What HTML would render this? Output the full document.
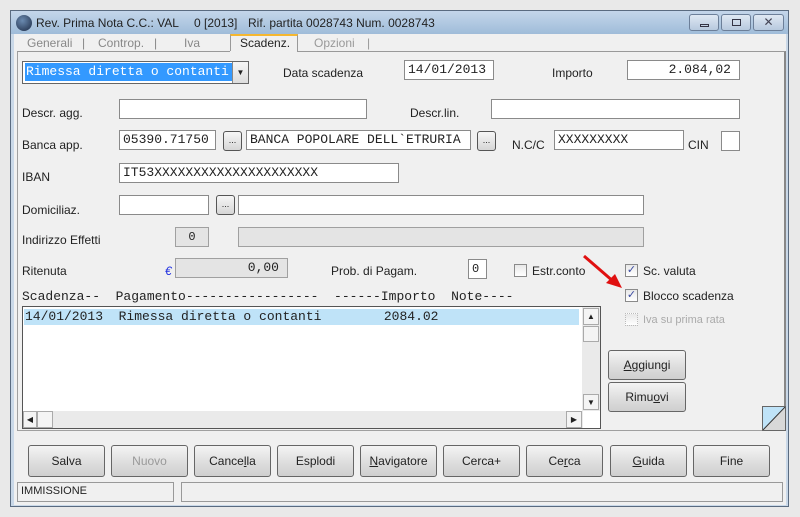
<!DOCTYPE html>
<html><head><meta charset="utf-8"><style>
*{box-sizing:border-box;margin:0;padding:0}
body{width:800px;height:517px;background:#e9e9e9;position:relative;overflow:hidden;font-family:"Liberation Sans",sans-serif;font-size:12px;color:#222}
.a{position:absolute}
.lbl{position:absolute;font-size:12px;color:#222}
.inp{position:absolute;background:#fff;border:1px solid #8a8a8a;height:20px;font-family:"Liberation Mono",monospace;font-size:13px;padding:1px 3px;line-height:16px;white-space:nowrap;overflow:hidden}
.dis{background:#e4e4e4;border-color:#a0a0a0}
.dot{position:absolute;width:19px;height:20px;border:1px solid #555;border-radius:3px;background:linear-gradient(#f6f6f6,#d6d6d6);font-size:9px;text-align:center;line-height:16px}
.btn{position:absolute;top:445px;height:32px;width:77px;border:1px solid #666;border-radius:3px;background:linear-gradient(#f4f4f4,#dcdcdc 60%,#cfcfcf);text-align:center;line-height:30px;font-size:12px;color:#222}
.cb{position:absolute;width:13px;height:13px;border:1px solid #8a8a8a;background:linear-gradient(#e8e8e8,#fff);font-size:11px;line-height:11px;text-align:center;color:#3a4aa0}
.mono{font-family:"Liberation Mono",monospace;font-size:13px;white-space:pre}
</style></head><body>
<!-- window frame -->
<div class="a" style="left:10px;top:10px;width:779px;height:497px;background:#c9d8e8;border:1px solid #5a6b80"></div>
<div class="a" style="left:11px;top:11px;width:777px;height:23px;background:linear-gradient(#c4d6ea,#9fbcd9)"></div>
<div class="a" style="left:16px;top:15px;width:16px;height:16px;border-radius:50%;background:radial-gradient(circle at 40% 35%,#6a8ab0,#1c2a44)"></div>
<div class="lbl" style="left:36px;top:16px">Rev. Prima Nota C.C.: VAL</div>
<div class="lbl" style="left:194px;top:16px">0 [2013]</div>
<div class="lbl" style="left:248px;top:16px">Rif. partita 0028743 Num. 0028743</div>
<div class="a" style="left:689px;top:14px;width:30px;height:17px;border:1px solid #6c7f99;border-radius:3px;background:linear-gradient(#dfe8f3,#b7c9de)"><div class="a" style="left:10px;top:9px;width:9px;height:3px;border:1px solid #334"></div></div>
<div class="a" style="left:721px;top:14px;width:30px;height:17px;border:1px solid #6c7f99;border-radius:3px;background:linear-gradient(#dfe8f3,#b7c9de)"><div class="a" style="left:10px;top:4px;width:9px;height:7px;border:1px solid #334"></div></div>
<div class="a" style="left:753px;top:14px;width:31px;height:17px;border:1px solid #6c7f99;border-radius:3px;background:linear-gradient(#dfe8f3,#b7c9de);text-align:center;font-size:12px;line-height:15px;color:#445">✕</div>
<!-- client -->
<div class="a" style="left:14px;top:34px;width:772px;height:471px;background:#f0f0f0"></div>
<!-- tabs -->
<div class="lbl" style="left:27px;top:36px;color:#888">Generali</div><div class="lbl" style="left:82px;top:36px;color:#888">|</div>
<div class="lbl" style="left:98px;top:36px;color:#888">Controp.</div><div class="lbl" style="left:154px;top:36px;color:#888">|</div>
<div class="lbl" style="left:184px;top:36px;color:#888">Iva</div>
<div class="a" style="left:230px;top:34px;width:68px;height:18px;background:#f0f0f0;border:1px solid #999;border-bottom:none;border-top:2px solid #f5b730"></div>
<div class="lbl" style="left:240px;top:36px">Scadenz.</div>
<div class="lbl" style="left:314px;top:36px;color:#999">Opzioni</div><div class="lbl" style="left:367px;top:36px;color:#999">|</div>
<!-- panel -->
<div class="a" style="left:17px;top:51px;width:769px;height:380px;border:1px solid #a0a0a0;border-right:2px solid #888;border-top-color:#999"></div>
<div class="a" style="left:230px;top:51px;width:67px;height:2px;background:#f0f0f0"></div>
<!-- row 1 -->
<div class="a" style="left:22px;top:61px;width:227px;height:23px;border:1px solid #666;background:#fff"></div>
<div class="a mono" style="left:25px;top:63px;width:207px;height:18px;background:#3399ff;color:#fff;line-height:18px;padding-left:1px;overflow:hidden">Rimessa diretta o contanti</div>
<div class="a" style="left:232px;top:62px;width:16px;height:21px;background:linear-gradient(#f6f6f6,#ddd);border-left:1px solid #888;font-size:8px;text-align:center;line-height:21px">▼</div>
<div class="lbl" style="left:283px;top:66px">Data scadenza</div>
<div class="inp" style="left:404px;top:60px;width:90px">14/01/2013</div>
<div class="lbl" style="left:552px;top:66px">Importo</div>
<div class="inp" style="left:627px;top:60px;width:113px;text-align:right;padding-right:8px">2.084,02</div>
<!-- row 2 -->
<div class="lbl" style="left:22px;top:106px">Descr. agg.</div>
<div class="inp" style="left:119px;top:99px;width:248px"></div>
<div class="lbl" style="left:410px;top:106px">Descr.lin.</div>
<div class="inp" style="left:491px;top:99px;width:249px"></div>
<!-- row 3 -->
<div class="lbl" style="left:22px;top:138px">Banca app.</div>
<div class="inp" style="left:119px;top:130px;width:97px">05390.71750</div>
<div class="dot" style="left:223px;top:131px">...</div>
<div class="inp" style="left:246px;top:130px;width:225px">BANCA POPOLARE DELL`ETRURIA</div>
<div class="dot" style="left:477px;top:131px">...</div>
<div class="lbl" style="left:512px;top:138px">N.C/C</div>
<div class="inp" style="left:554px;top:130px;width:130px">XXXXXXXXX</div>
<div class="lbl" style="left:688px;top:138px">CIN</div>
<div class="inp" style="left:721px;top:131px;width:19px"></div>
<!-- IBAN -->
<div class="lbl" style="left:22px;top:170px">IBAN</div>
<div class="inp" style="left:119px;top:163px;width:280px">IT53XXXXXXXXXXXXXXXXXXXXX</div>
<!-- domic -->
<div class="lbl" style="left:22px;top:203px">Domiciliaz.</div>
<div class="inp" style="left:119px;top:195px;width:90px"></div>
<div class="dot" style="left:216px;top:195px">...</div>
<div class="inp" style="left:238px;top:195px;width:406px"></div>
<!-- indirizzo -->
<div class="lbl" style="left:22px;top:233px">Indirizzo Effetti</div>
<div class="inp dis" style="left:175px;top:227px;width:34px;text-align:center;font-size:12px">0</div>
<div class="inp dis" style="left:238px;top:227px;width:406px"></div>
<!-- ritenuta -->
<div class="lbl" style="left:22px;top:264px">Ritenuta</div>
<div class="lbl" style="left:165px;top:264px;color:#2030e0;font-style:italic">€</div>
<div class="inp dis" style="left:175px;top:258px;width:113px;text-align:right;padding-right:8px">0,00</div>
<div class="lbl" style="left:331px;top:264px">Prob. di Pagam.</div>
<div class="inp" style="left:468px;top:259px;width:19px;font-size:12px">0</div>
<div class="cb" style="left:514px;top:264px"></div>
<div class="lbl" style="left:532px;top:264px">Estr.conto</div>
<div class="cb" style="left:625px;top:264px">✓</div>
<div class="lbl" style="left:643px;top:264px">Sc. valuta</div>
<div class="cb" style="left:625px;top:289px">✓</div>
<div class="lbl" style="left:643px;top:289px">Blocco scadenza</div>
<div class="cb" style="left:625px;top:313px;border-style:dotted;border-color:#bbb"></div>
<div class="lbl" style="left:643px;top:314px;color:#aaa;font-size:11px">Iva su prima rata</div>
<!-- red arrow -->
<svg class="a" style="left:580px;top:252px" width="45" height="40"><line x1="4" y1="4" x2="34" y2="30" stroke="#e01010" stroke-width="3"/><polygon points="42,36 26,31 35,22" fill="#e01010"/></svg>
<!-- list -->
<div class="a mono" style="left:22px;top:289px;line-height:15px">Scadenza--  Pagamento-----------------  ------Importo  Note----</div>
<div class="a" style="left:22px;top:306px;width:579px;height:123px;border:1px solid #555;background:#fff"></div>
<div class="a mono" style="left:24px;top:309px;width:555px;height:16px;background:#bfe3f8;line-height:16px;padding-left:1px">14/01/2013  Rimessa diretta o contanti        2084.02</div>
<div class="a" style="left:582px;top:307px;width:18px;height:104px;background:#eaeaea"></div>
<div class="a" style="left:583px;top:308px;width:16px;height:17px;border:1px solid #aaa;background:#f4f4f4;font-size:8px;text-align:center;line-height:15px">▲</div>
<div class="a" style="left:583px;top:326px;width:16px;height:16px;border:1px solid #aaa;background:#f4f4f4"></div>
<div class="a" style="left:583px;top:394px;width:16px;height:16px;border:1px solid #aaa;background:#f4f4f4;font-size:8px;text-align:center;line-height:15px">▼</div>
<div class="a" style="left:23px;top:411px;width:560px;height:17px;background:#eaeaea"></div>
<div class="a" style="left:23px;top:411px;width:14px;height:17px;border:1px solid #aaa;background:#f4f4f4;font-size:8px;text-align:center;line-height:15px">◀</div>
<div class="a" style="left:37px;top:411px;width:16px;height:17px;border:1px solid #aaa;background:#f4f4f4"></div>
<div class="a" style="left:566px;top:411px;width:16px;height:17px;border:1px solid #aaa;background:#f4f4f4;font-size:8px;text-align:center;line-height:15px">▶</div>
<!-- side buttons -->
<div class="btn" style="left:608px;top:350px;width:78px;height:30px;line-height:28px"><u>A</u>ggiungi</div>
<div class="btn" style="left:608px;top:382px;width:78px;height:30px;line-height:28px">Rimu<u>o</u>vi</div>
<svg class="a" style="left:762px;top:406px" width="24" height="25"><polygon points="0,0 24,0 0,25" fill="#bfe3f8"/><polygon points="24,0 24,25 0,25" fill="#d8d8d8"/><line x1="24" y1="0" x2="0" y2="25" stroke="#333"/><rect x="0.5" y="0.5" width="23" height="24" fill="none" stroke="#666"/></svg>
<!-- bottom buttons -->
<div class="btn" style="left:28px">Salva</div>
<div class="btn" style="left:111px;color:#999">Nuovo</div>
<div class="btn" style="left:194px">Cance<u>l</u>la</div>
<div class="btn" style="left:277px">Esplodi</div>
<div class="btn" style="left:360px"><u>N</u>avigatore</div>
<div class="btn" style="left:443px">Cerca+</div>
<div class="btn" style="left:526px">Ce<u>r</u>ca</div>
<div class="btn" style="left:610px"><u>G</u>uida</div>
<div class="btn" style="left:693px">Fine</div>
<!-- status -->
<div class="a" style="left:17px;top:482px;width:157px;height:20px;border:1px solid #999;font-size:11px;padding:2px 3px">IMMISSIONE</div>
<div class="a" style="left:181px;top:482px;width:602px;height:20px;border:1px solid #999"></div>
</body></html>
